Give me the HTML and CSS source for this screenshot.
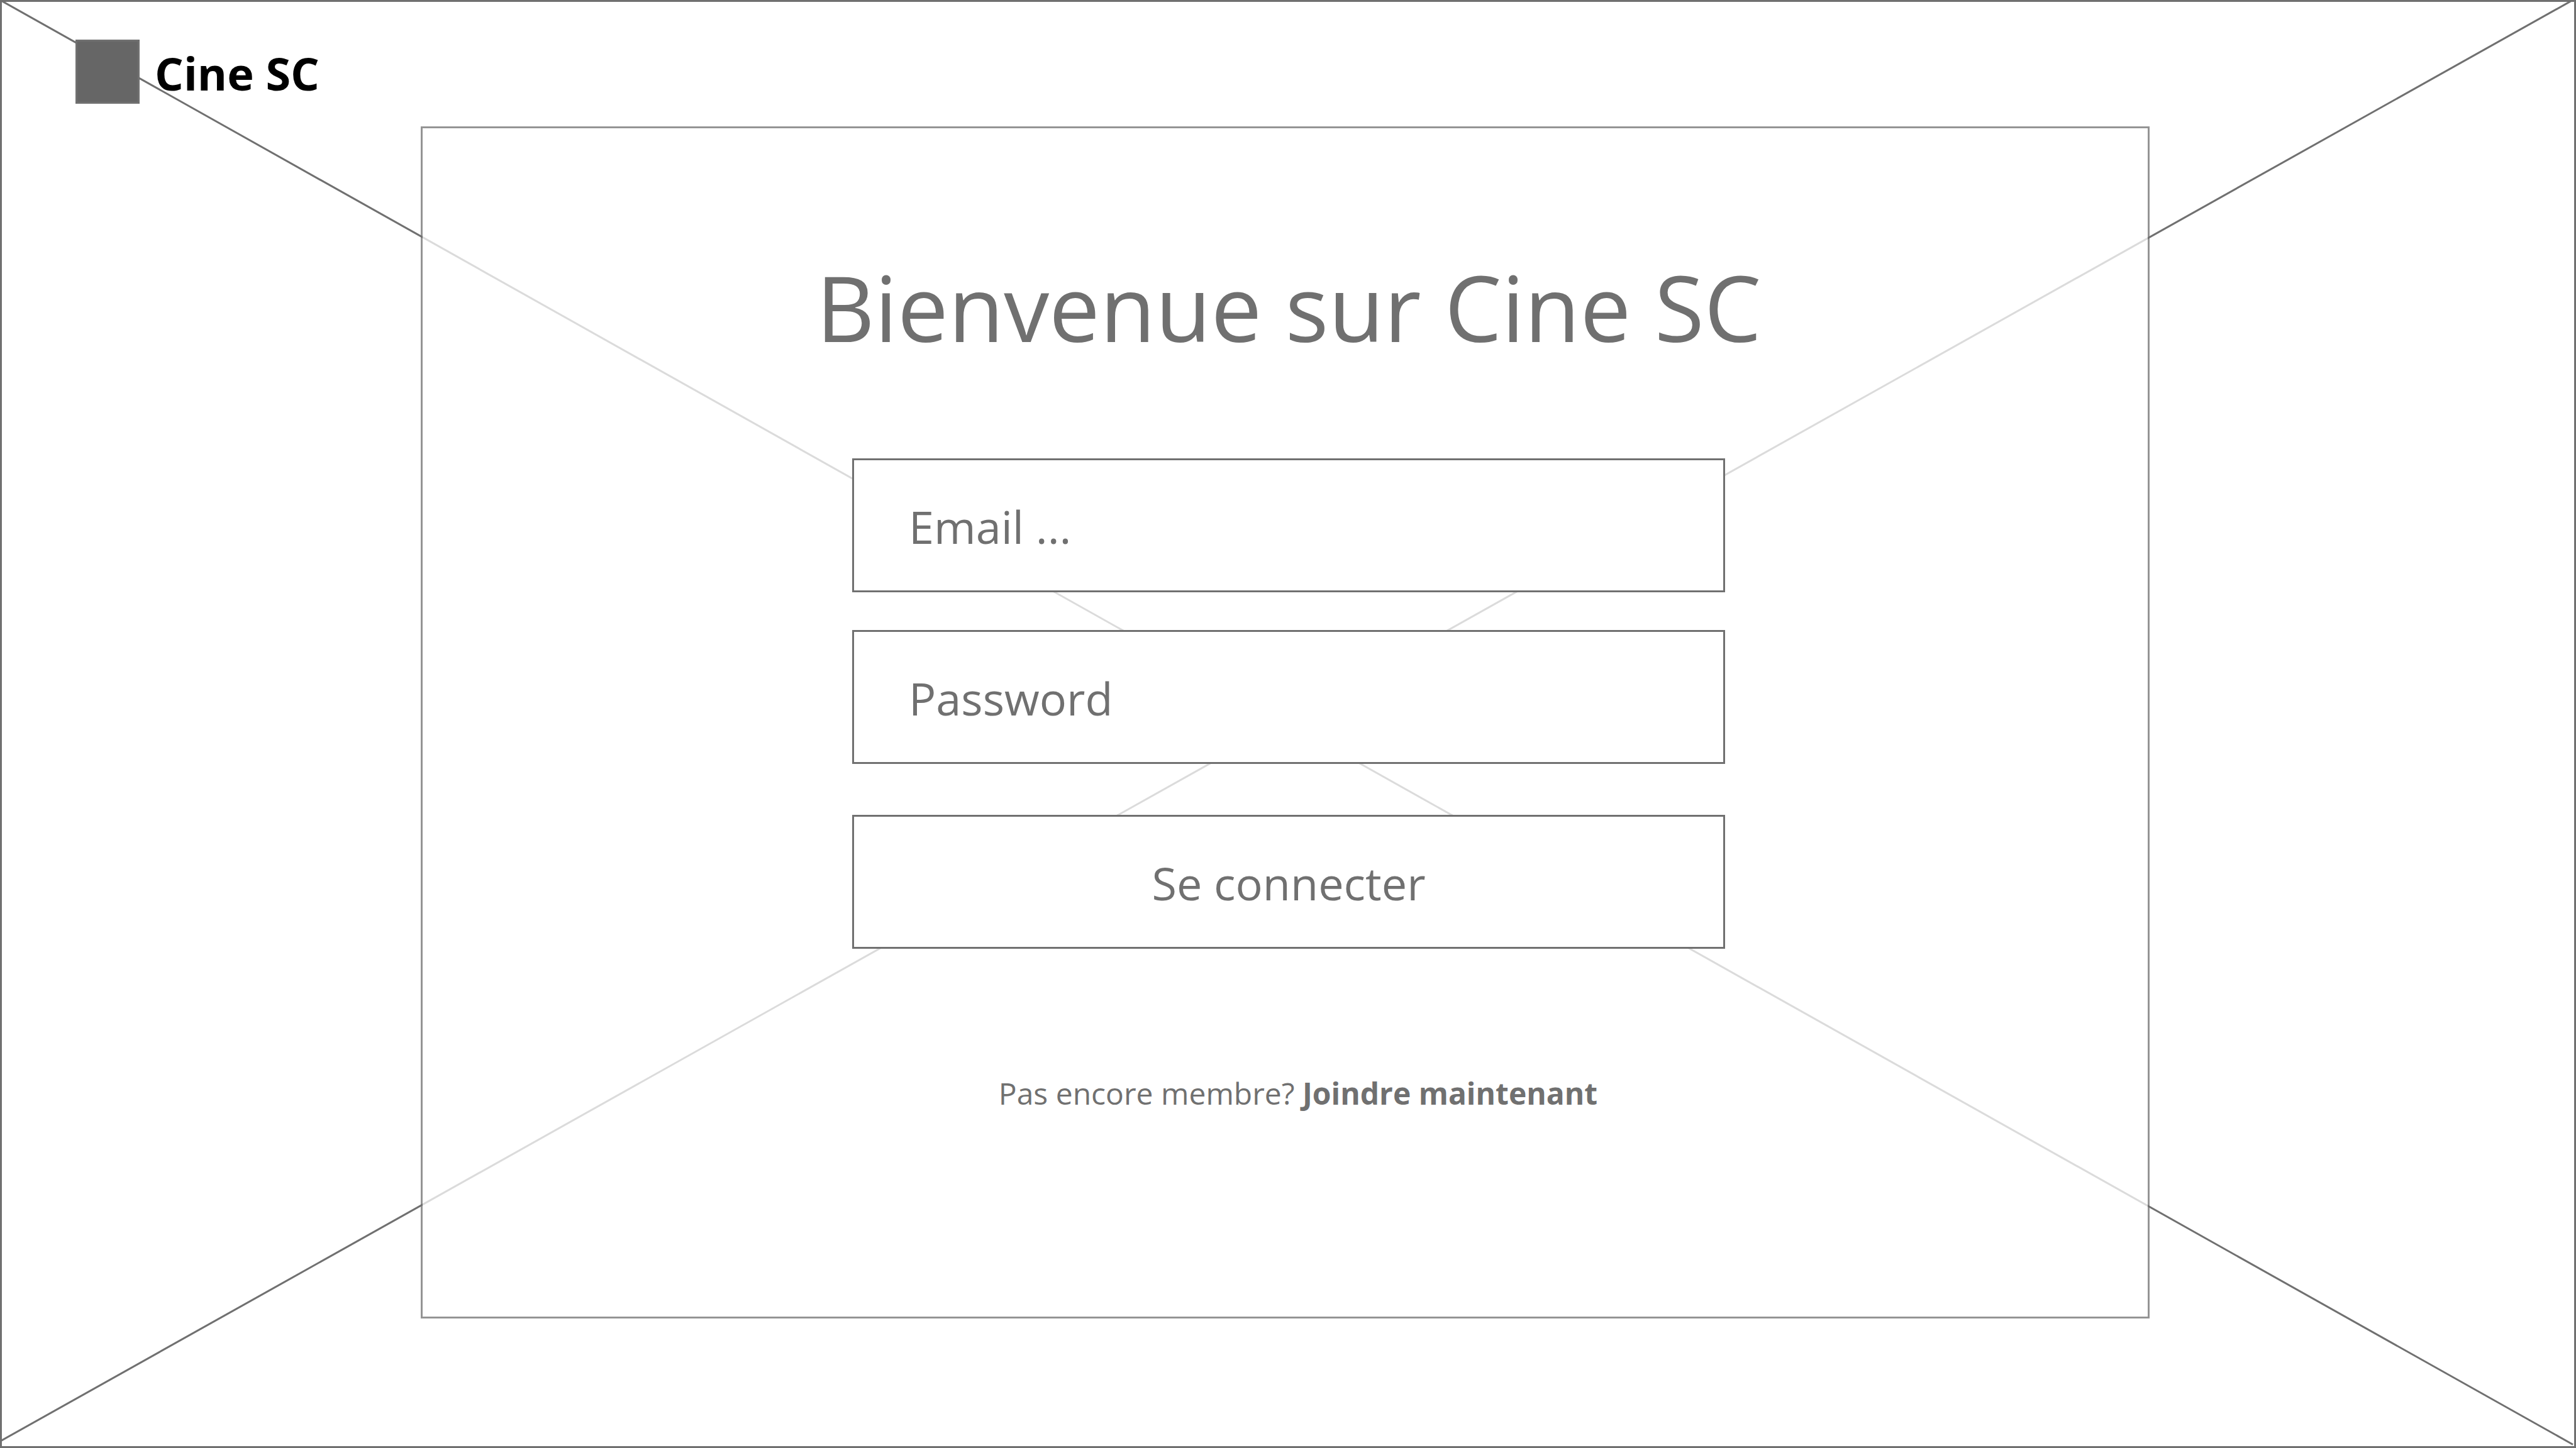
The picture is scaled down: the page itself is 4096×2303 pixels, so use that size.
FILE: index.html
```html
<!DOCTYPE html>
<html lang="fr">
<head>
  <meta charset="utf-8">
  <meta name="viewport" content="width=device-width, initial-scale=1">
  <title>Cine SC</title>
  <link rel="stylesheet" href="styles.css">
</head>
<body>
  <div class="page">
    <svg class="backdrop" viewBox="0 0 10000 10000" preserveAspectRatio="none" aria-hidden="true">
      <line x1="0" y1="0" x2="9988" y2="9976"/>
      <line x1="9988" y1="0" x2="0" y2="9954"/>
    </svg>
    <header class="brand">
      <span class="brand-mark"></span>
      <span class="brand-name">Cine SC</span>
    </header>
    <main class="panel">
      <h1 class="title">Bienvenue sur Cine SC</h1>
      <form class="login">
        <input class="control field" type="email" placeholder="Email ..." aria-label="Email">
        <input class="control field" type="password" placeholder="Password" aria-label="Password">
        <button class="control submit" type="submit">Se connecter</button>
      </form>
      <p class="signup">Pas encore membre? <a class="signup-link" href="#">Joindre maintenant</a></p>
    </main>
  </div>
</body>
</html>
```
FILE: styles.css
```css
*,
*::before,
*::after {
  box-sizing: border-box;
}

body {
  margin: 0;
  background: #fff;
  color: #707070;
  font-family: "Segoe UI", "Open Sans", "Noto Sans", sans-serif;
}

.page {
  position: relative;
  isolation: isolate;
  display: flex;
  flex-direction: column;
  min-height: 100vh;
  padding: 60px 0;
  border: 3px solid #707070;
}

/* Crossed diagonals standing in for the background picture */
.backdrop {
  position: absolute;
  inset: -3px;
  z-index: -1;
  width: calc(100% + 6px);
  height: calc(100% + 6px);
}

.backdrop line {
  stroke: #707070;
  stroke-width: 3px;
  vector-effect: non-scaling-stroke;
}

.brand {
  display: flex;
  align-items: center;
  gap: 24px;
  height: 102px;
  margin-left: 117px;
}

.brand-mark {
  width: 102px;
  height: 102px;
  border: 3px solid #707070;
  background: #666;
}

.brand-name {
  padding-top: 4px;
  color: #000;
  font-size: 72px;
  font-weight: 700;
  line-height: 96px;
}

.panel {
  display: flex;
  flex-direction: column;
  align-items: center;
  margin: 36px 675px 0 666px;
  padding: 186px 0 319px 11px;
  border: 3px solid rgba(112, 112, 112, 0.75);
  background: rgba(255, 255, 255, 0.75);
  background-clip: padding-box;
}

.title {
  margin: 0;
  font-size: 144px;
  font-weight: 400;
  line-height: 196px;
}

.login {
  display: flex;
  flex-direction: column;
  width: 100%;
  max-width: 1388px;
  margin-top: 143px;
}

.control {
  width: 100%;
  height: 213px;
  margin: 0;
  border: 3px solid #707070;
  border-radius: 0;
  background: #fff;
  color: #707070;
  font-family: inherit;
  font-size: 72px;
}

.field {
  margin-bottom: 60px;
  padding: 2px 87px 0;
}

.field::placeholder {
  color: #707070;
  opacity: 1;
}

.submit {
  margin-top: 21px;
  padding: 2px 0 0;
}

.signup {
  margin: 194px 0 0;
  padding-left: 30px;
  font-size: 48px;
  line-height: 72px;
}

.signup-link {
  color: inherit;
  font-weight: 700;
  text-decoration: none;
}
```
